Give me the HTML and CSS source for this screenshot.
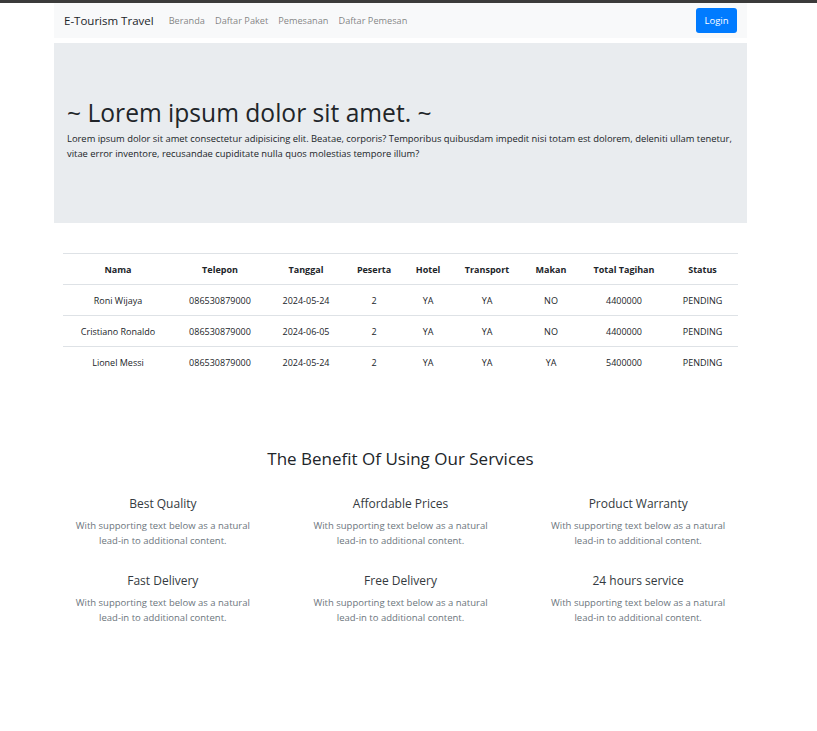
FILE: index.html
```html
<!DOCTYPE html>
<html lang="id">
<head>
<meta charset="utf-8">
<title>E-Tourism Travel</title>
<link rel="stylesheet" href="styles.css">
</head>
<body>
<div class="topbar"></div>
<div class="page">
  <nav class="navbar">
    <a class="brand" href="#">E-Tourism Travel</a>
    <ul class="nav-links">
      <li><a href="#">Beranda</a></li>
      <li><a href="#">Daftar Paket</a></li>
      <li><a href="#">Pemesanan</a></li>
      <li><a href="#">Daftar Pemesan</a></li>
    </ul>
    <button class="btn-login" type="button">Login</button>
  </nav>

  <section class="jumbotron">
    <h1>~ Lorem ipsum dolor sit amet. ~</h1>
    <p>Lorem ipsum dolor sit amet consectetur adipisicing elit. Beatae, corporis? Temporibus quibusdam impedit nisi totam est dolorem, deleniti ullam tenetur, vitae error inventore, recusandae cupiditate nulla quos molestias tempore illum?</p>
  </section>

  <table class="orders">
    <thead>
      <tr>
        <th class="c-nama">Nama</th>
        <th class="c-tel">Telepon</th>
        <th class="c-tgl">Tanggal</th>
        <th class="c-pes">Peserta</th>
        <th class="c-hotel">Hotel</th>
        <th class="c-trans">Transport</th>
        <th class="c-makan">Makan</th>
        <th class="c-total">Total Tagihan</th>
        <th class="c-status">Status</th>
      </tr>
    </thead>
    <tbody>
      <tr><td>Roni Wijaya</td><td>086530879000</td><td>2024-05-24</td><td>2</td><td>YA</td><td>YA</td><td>NO</td><td>4400000</td><td>PENDING</td></tr>
      <tr><td>Cristiano Ronaldo</td><td>086530879000</td><td>2024-06-05</td><td>2</td><td>YA</td><td>YA</td><td>NO</td><td>4400000</td><td>PENDING</td></tr>
      <tr><td>Lionel Messi</td><td>086530879000</td><td>2024-05-24</td><td>2</td><td>YA</td><td>YA</td><td>YA</td><td>5400000</td><td>PENDING</td></tr>
    </tbody>
  </table>

  <section class="benefits">
    <h2>The Benefit Of Using Our Services</h2>
    <div class="benefit-grid">
      <div class="benefit"><h5>Best Quality</h5><p>With supporting text below as a natural <span class="nw">lead-in</span> to additional content.</p></div>
      <div class="benefit"><h5>Affordable Prices</h5><p>With supporting text below as a natural <span class="nw">lead-in</span> to additional content.</p></div>
      <div class="benefit"><h5>Product Warranty</h5><p>With supporting text below as a natural <span class="nw">lead-in</span> to additional content.</p></div>
      <div class="benefit"><h5>Fast Delivery</h5><p>With supporting text below as a natural <span class="nw">lead-in</span> to additional content.</p></div>
      <div class="benefit"><h5>Free Delivery</h5><p>With supporting text below as a natural <span class="nw">lead-in</span> to additional content.</p></div>
      <div class="benefit"><h5>24 hours service</h5><p>With supporting text below as a natural <span class="nw">lead-in</span> to additional content.</p></div>
    </div>
  </section>
</div>
</body>
</html>
```

FILE: styles.css
```css
* { box-sizing: border-box; }

body {
  margin: 0;
  background: #fff;
  font-family: "Open Sans", "Noto Sans", "Liberation Sans", sans-serif;
  color: #212529;
}

.topbar {
  height: 3px;
  background: #3b3b3b;
}

.page {
  width: 693px;
  margin-left: 54px;
}

/* Navbar */
.navbar {
  height: 35px;
  background: #f8f9fa;
  display: flex;
  align-items: center;
  padding: 0 10px;
}

.brand {
  font-size: 11.5px;
  color: #212529;
  text-decoration: none;
  margin-right: 10px;
}

.nav-links {
  list-style: none;
  margin: 0;
  padding: 0;
  display: flex;
}

.nav-links a {
  display: block;
  padding: 0 5px;
  font-size: 9.2px;
  color: rgba(0, 0, 0, 0.5);
  text-decoration: none;
}

.btn-login {
  margin-left: auto;
  width: 41px;
  height: 25px;
  border: 0;
  border-radius: 3px;
  background: #007bff;
  color: #fff;
  font-family: inherit;
  font-size: 9.5px;
  padding: 0;
}

/* Jumbotron */
.jumbotron {
  margin-top: 5px;
  height: 180px;
  background: #e9ecef;
  padding: 55px 13px 0;
}

.jumbotron h1 {
  margin: 0 0 3px;
  font-size: 24.6px;
  line-height: 30px;
  font-weight: 500;
  color: #212529;
}

.jumbotron p {
  margin: 0;
  font-size: 9.4px;
  line-height: 15px;
  color: #212529;
}

/* Table */
.orders {
  margin: 30px 0 0 9px;
  width: 675px;
  border-collapse: collapse;
  font-size: 9px;
  color: #212529;
}

.orders th,
.orders td {
  height: 31px;
  padding: 0;
  text-align: center;
  vertical-align: middle;
  border-top: 1px solid #dee2e6;
}

.orders th { font-weight: 700; }

.c-nama { width: 110px; }
.c-tel { width: 94px; }
.c-tgl { width: 78px; }
.c-pes { width: 58px; }
.c-hotel { width: 50px; }
.c-trans { width: 68px; }
.c-makan { width: 60px; }
.c-total { width: 86px; }
.c-status { width: 71px; }

/* Benefits */
.benefits {
  margin-top: 70px;
}

.benefits h2 {
  margin: 0;
  text-align: center;
  font-size: 17px;
  line-height: 22px;
  font-weight: 500;
  color: #212529;
}

.benefit-grid {
  margin: 26px -10px 0;
  display: grid;
  grid-template-columns: repeat(3, 1fr);
  row-gap: 25px;
}

.benefit {
  text-align: center;
}

.benefit h5 {
  margin: 0 0 6px;
  font-size: 12px;
  line-height: 16px;
  font-weight: 400;
  color: #343a40;
}

.benefit p {
  margin: 0 auto;
  width: 200px;
  font-size: 9.5px;
  line-height: 15px;
  color: #6c757d;
}

.nw { white-space: nowrap; }
```
